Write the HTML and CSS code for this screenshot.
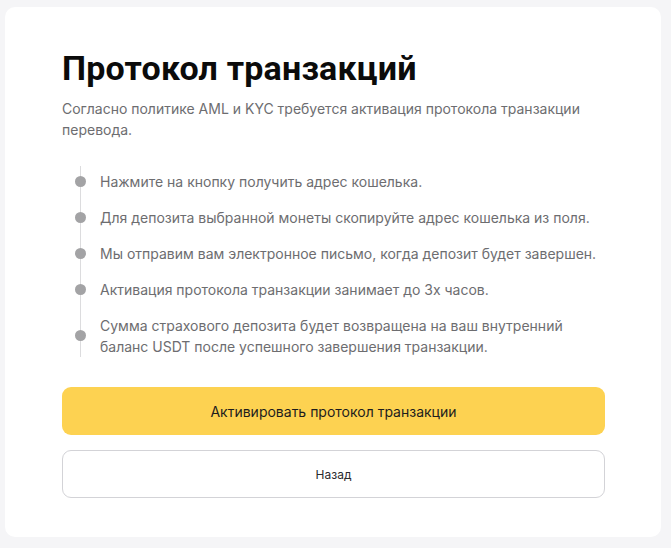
FILE: index.html
```html
<!DOCTYPE html>
<html lang="ru">
<head>
<meta charset="utf-8">
<link rel="stylesheet" href="styles.css">
</head>
<body>
<div class="page">
  <div class="card">
    <h1 class="title">Протокол транзакций</h1>
    <p class="lead">Согласно политике AML и KYC требуется активация протокола транзакции перевода.</p>
    <ul class="steps">
      <li class="step">Нажмите на кнопку получить адрес кошелька.</li>
      <li class="step">Для депозита выбранной монеты скопируйте адрес кошелька из поля.</li>
      <li class="step">Мы отправим вам электронное письмо, когда депозит будет завершен.</li>
      <li class="step">Активация протокола транзакции занимает до 3х часов.</li>
      <li class="step">Сумма страхового депозита будет возвращена на ваш внутренний баланс USDT после успешного завершения транзакции.</li>
    </ul>
    <div class="actions">
      <button class="btn btn-primary">Активировать протокол транзакции</button>
      <button class="btn btn-secondary">Назад</button>
    </div>
  </div>
</div>
</body>
</html>
```
FILE: styles.css
```css
html, body {
  margin: 0;
  padding: 0;
  background: #f5f5f7;
}
body {
  font-family: Inter, "Noto Sans", sans-serif;
  color: #111;
}
.page {
  padding: 7px 10px 11px 5px;
}
.card {
  background: #fff;
  border-radius: 10px;
  padding: 41px 56px 40px 57px;
  box-sizing: border-box;
  height: 530px;
}
.title {
  margin: 0;
  font-family: Roboto, Inter, sans-serif;
  font-weight: 700;
  font-size: 34px;
  line-height: 40px;
  color: #0b0b0b;
  letter-spacing: 0.2px;
}
.lead {
  margin: 10px 0 0;
  font-size: 14px;
  line-height: 21px;
  color: #6d6d70;
}
.steps {
  list-style: none;
  margin: 26px 0 0 0;
  padding: 5px 0 0 38px;
  position: relative;
}
.steps::before {
  content: "";
  position: absolute;
  left: 18px;
  top: 0;
  bottom: 0;
  width: 1px;
  background: #dcdcde;
}
.step {
  position: relative;
  font-size: 14px;
  line-height: 21px;
  color: #6d6d70;
  margin-bottom: 15px;
}
.step:last-child {
  margin-bottom: 0;
}
.step::before {
  content: "";
  position: absolute;
  left: -25px;
  top: 50%;
  margin-top: -6px;
  width: 11px;
  height: 11px;
  border-radius: 50%;
  background: #a3a3a5;
}
.actions {
  display: flex;
  flex-direction: column;
  gap: 15px;
  margin-top: 30px;
}
.btn {
  font-family: Inter, sans-serif;
  width: 100%;
  border-radius: 9px;
  cursor: pointer;
}
.btn-primary {
  height: 48px;
  border: none;
  background: #fdd251;
  font-size: 14px;
  color: #1d1d1d;
}
.btn-secondary {
  height: 48px;
  border: 1px solid #d3d3d7;
  background: #fff;
  font-size: 12px;
  color: #2a2a2e;
}
```
